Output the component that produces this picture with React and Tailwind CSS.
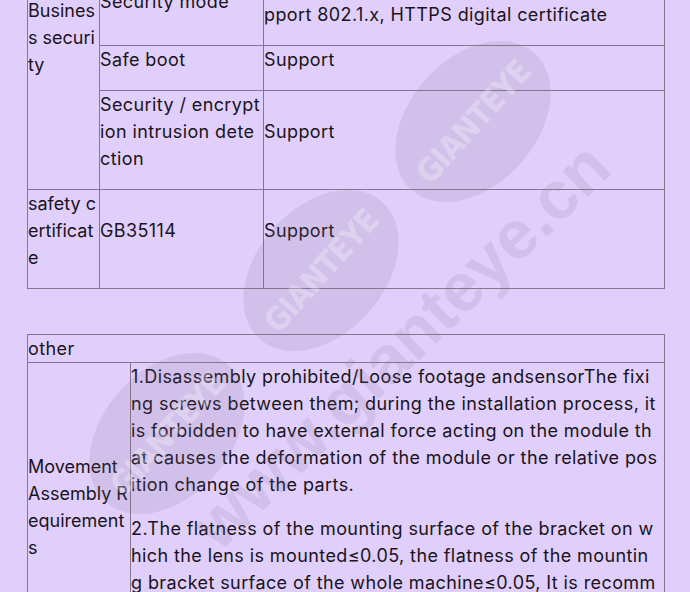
import React from 'react';

const cell = 'border border-[#85778f] p-0 align-middle';

// paragraph inside a cell: one blank line of space below, as in the spec sheet
const P = ({ children }) => <p className="mb-[17px] whitespace-nowrap">{children}</p>;

const Oval = ({ className }) => (
  <div
    className={`absolute w-[184px] h-[127px] rounded-[50%] bg-[#786c8a]/[0.15] rotate-[-48deg] flex items-center justify-center ${className}`}
  >
    <span className="font-['Liberation_Sans_Narrow','DejaVu_Sans_Condensed',sans-serif] font-bold text-[32px] leading-none tracking-[-1px] text-white/30">
      GIANTEYE
    </span>
  </div>
);

export default function App() {
  return (
    <div className="relative h-[592px] overflow-hidden bg-[#e0cffb] text-[18px] leading-[27px] tracking-[0.4px] text-[#1a1320] font-['Inter','Noto_Sans',sans-serif]">
      {/* Security table (scrolled, first row partly above the fold) */}
      <div className="-mt-[27px] pl-[27px]">
        <table className="w-[638px] table-fixed">
          <colgroup>
            <col className="w-[72px]" />
            <col className="w-[164px]" />
            <col />
          </colgroup>
          <tbody>
            <tr>
              <td rowSpan={3} className={`${cell} !align-top pt-[23px] tracking-normal`}>
                <div className="whitespace-nowrap">
                  Busines<br />s securi<br />ty
                </div>
              </td>
              <td className={cell}>
                <P>Security mode</P>
              </td>
              <td className={cell}>
                <P>
                  Support IEEE 802.1x, user authentication, Su<br />
                  pport 802.1.x, HTTPS digital certificate
                </P>
              </td>
            </tr>
            <tr>
              <td className={cell}>
                <P>Safe boot</P>
              </td>
              <td className={cell}>
                <P>Support</P>
              </td>
            </tr>
            <tr>
              <td className={cell}>
                <P>
                  Security / encrypt<br />ion intrusion dete<br />ction
                </P>
              </td>
              <td className={cell}>
                <P>Support</P>
              </td>
            </tr>
            <tr>
              <td className={`${cell} tracking-normal`}>
                <P>
                  safety c<br />ertificat<br />e
                </P>
              </td>
              <td className={cell}>
                <P>GB35114</P>
              </td>
              <td className={cell}>
                <P>Support</P>
              </td>
            </tr>
          </tbody>
        </table>
      </div>

      {/* Other */}
      <div className="mt-[45px] pl-[27px]">
        <table className="w-[638px] table-fixed">
          <colgroup>
            <col className="w-[103px]" />
            <col />
          </colgroup>
          <tbody>
            <tr>
              <td colSpan={2} className={cell}>
                other
              </td>
            </tr>
            <tr>
              <td className={`${cell} tracking-normal`}>
                <P>
                  Movement<br />Assembly R<br />equirement<br />s
                </P>
              </td>
              <td className={cell}>
                <P>
                  1.Disassembly prohibited/Loose footage andsensorThe fixi<br />
                  ng screws between them; during the installation process, it<br />
                  is forbidden to have external force acting on the module th<br />
                  at causes the deformation of the module or the relative pos<br />
                  ition change of the parts.
                </P>
                <P>
                  2.The flatness of the mounting surface of the bracket on w<br />
                  hich the lens is mounted≤0.05, the flatness of the mountin<br />
                  g bracket surface of the whole machine≤0.05, It is recomm<br />
                  ended to keep the bracket flat to ensure the imaging qual<br />
                  ity of the whole machine.
                </P>
              </td>
            </tr>
          </tbody>
        </table>
      </div>

      {/* Watermark */}
      <div className="pointer-events-none absolute inset-0">
        <Oval className="left-[381px] top-[58px]" />
        <Oval className="left-[229px] top-[207px]" />
        <Oval className="left-[75px] top-[370px]" />
        <div className="absolute left-[400px] top-[345px] -translate-x-1/2 -translate-y-1/2 rotate-[-44deg] whitespace-nowrap font-['Liberation_Sans',sans-serif] font-bold text-[68px] leading-none tracking-normal text-[#786c8a]/[0.15]">
          www.gianteye.cn
        </div>
      </div>
    </div>
  );
}
